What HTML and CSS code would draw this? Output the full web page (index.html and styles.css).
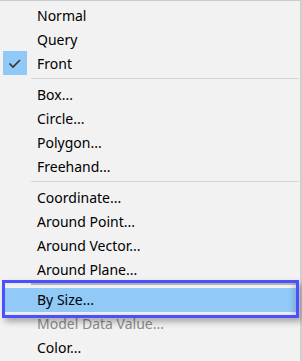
FILE: index.html
```html
<!DOCTYPE html>
<html lang="en">
  <head>
    <meta charset="UTF-8" />
    <title>Selection menu</title>
    <link rel="stylesheet" href="styles.css">
  </head>
  <body>
    <div class="menu">
      <ul class="menu-list">
        <li class="item"><span class="icon"></span><span class="label">Normal</span></li>
        <li class="item"><span class="icon"></span><span class="label">Query</span></li>
        <li class="item checked">
          <span class="icon">
            <svg width="24" height="24" viewBox="0 0 24 24">
              <path d="M6.5 12.5 L10 16 L17 9" fill="none" stroke="#333" stroke-width="1.6" />
            </svg>
          </span>
          <span class="label">Front</span>
        </li>
        <li class="sep"></li>
        <li class="item"><span class="icon"></span><span class="label">Box...</span></li>
        <li class="item"><span class="icon"></span><span class="label">Circle...</span></li>
        <li class="item"><span class="icon"></span><span class="label">Polygon...</span></li>
        <li class="item"><span class="icon"></span><span class="label">Freehand...</span></li>
        <li class="sep"></li>
        <li class="item"><span class="icon"></span><span class="label">Coordinate...</span></li>
        <li class="item"><span class="icon"></span><span class="label">Around Point...</span></li>
        <li class="item"><span class="icon"></span><span class="label">Around Vector...</span></li>
        <li class="item"><span class="icon"></span><span class="label">Around Plane...</span></li>
        <li class="sep sep-short"></li>
        <li class="item hover"><span class="icon"></span><span class="label">By Size...</span></li>
        <li class="item disabled"><span class="icon"></span><span class="label">Model Data Value...</span></li>
        <li class="item"><span class="icon"></span><span class="label">Color...</span></li>
      </ul>
      <!-- callout frame drawn over the hovered entry -->
      <div class="callout"></div>
    </div>
  </body>
</html>
```

FILE: styles.css
```css
* {
  box-sizing: border-box;
  margin: 0;
  padding: 0;
}
html,
body {
  height: 100%;
}
body {
  background: #f2f2f2;
  font-family: "Noto Sans", "Open Sans", sans-serif;
  overflow: hidden;
}
/* Menu panel */
.menu {
  position: relative;
  width: 302px;
  height: 361px;
  background: #f2f2f2;
  border-top: 1px solid #cccccc;
  border-right: 2px solid #cfcfcf;
  padding-top: 2.5px;
}
.menu-list {
  list-style: none;
}
.item {
  display: flex;
  align-items: center;
  height: 23.75px;
  margin: 0 2px;
  padding-left: 1px;
  font-size: 14px;
  color: #000;
}
.icon {
  width: 24px;
  height: 24px;
  flex: none;
  margin-right: 10px;
}
.icon svg {
  display: block;
}
.item.checked .icon {
  background: #90c8f6;
}
.label {
  line-height: 23.75px;
  padding-top: 1px;
}
.item.hover {
  background: #91c9f7;
}
.item.disabled {
  color: #8c8c8c;
}
/* Separators */
.sep {
  height: 8px;
  display: flex;
  align-items: center;
  padding: 0 1px 0 31px;
}
.sep::before {
  content: "";
  display: block;
  width: 100%;
  height: 1px;
  background: #d6d6d6;
}
.sep-short {
  height: 7px;
}
.sep-short::before {
  height: 2px;
  background: #b8b8b8;
}
/* Blue callout frame */
.callout {
  position: absolute;
  left: 2px;
  top: 279px;
  width: 297px;
  height: 38px;
  border: 3px solid #4a50ff;
  box-shadow: 3px 4px 6px rgba(0, 0, 0, 0.3), inset -3px 0 4px rgba(0, 0, 0, 0.12);
  pointer-events: none;
}
```
